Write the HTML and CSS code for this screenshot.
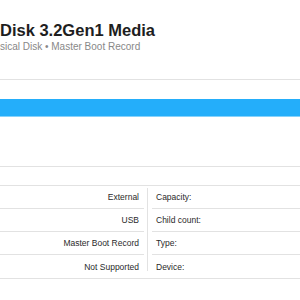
FILE: index.html
```html
<!DOCTYPE html>
<html lang="en">
<head>
    <meta charset="UTF-8">
    <meta name="viewport" content="width=device-width, initial-scale=1.0">
    <title>Disk Info</title>
    <link rel="stylesheet" href="styles.css">
</head>
<body>
    <div class="header">
        <h1 class="title">Disk 3.2Gen1 Media</h1>
        <p class="subtitle">sical Disk • Master Boot Record</p>
    </div>

    <!-- usage bar -->
    <div class="usage">
        <div class="usage-bar"></div>
    </div>

    <div class="info">
        <div class="col col-left">
            <div class="row">External</div>
            <div class="row">USB</div>
            <div class="row">Master Boot Record</div>
            <div class="row">Not Supported</div>
        </div>
        <div class="divider"></div>
        <div class="col col-right">
            <div class="row">Capacity:</div>
            <div class="row">Child count:</div>
            <div class="row">Type:</div>
            <div class="row">Device:</div>
        </div>
    </div>
</body>
</html>
```

FILE: styles.css
```css
* {
    box-sizing: border-box;
}
body {
    margin: 0;
    background-color: #ffffff;
    font-family: 'Liberation Sans', Arial, sans-serif;
    overflow: hidden;
}
.header {
    padding-top: 21px;
    height: 80px;
    border-bottom: 1px solid #e2e2e2;
    white-space: nowrap;
}
.title {
    margin: 0;
    font-size: 16.5px;
    line-height: 19px;
    font-weight: bold;
    color: #1e1e1e;
}
.subtitle {
    margin: 1px 0 0;
    font-size: 10px;
    line-height: 12px;
    color: #888;
}
.usage {
    padding-top: 19px;
    height: 87px;
    border-bottom: 1px solid #e2e2e2;
}
.usage-bar {
    height: 18px;
    background-color: #24aefa;
    border-bottom: 1px solid #86d2fb;
}
.info {
    margin-top: 18px;
    display: grid;
    grid-template-columns: 144px 1px 1fr;
    column-gap: 3px;
    border-top: 1px solid #e2e2e2;
    border-bottom: 1px solid #e2e2e2;
    font-size: 8.5px;
    color: #2a2a2a;
}
.row {
    height: 23px;
    display: flex;
    align-items: center;
    border-bottom: 1px solid #e2e2e2;
}
.row:last-child {
    border-bottom: none;
}
.col-left .row {
    justify-content: flex-end;
    padding-right: 5px;
}
.col-right {
    padding-left: 1px;
}
.col-right .row {
    padding-left: 4px;
}
.divider {
    background-color: #e2e2e2;
    margin: 2px 0 7px;
}
```
